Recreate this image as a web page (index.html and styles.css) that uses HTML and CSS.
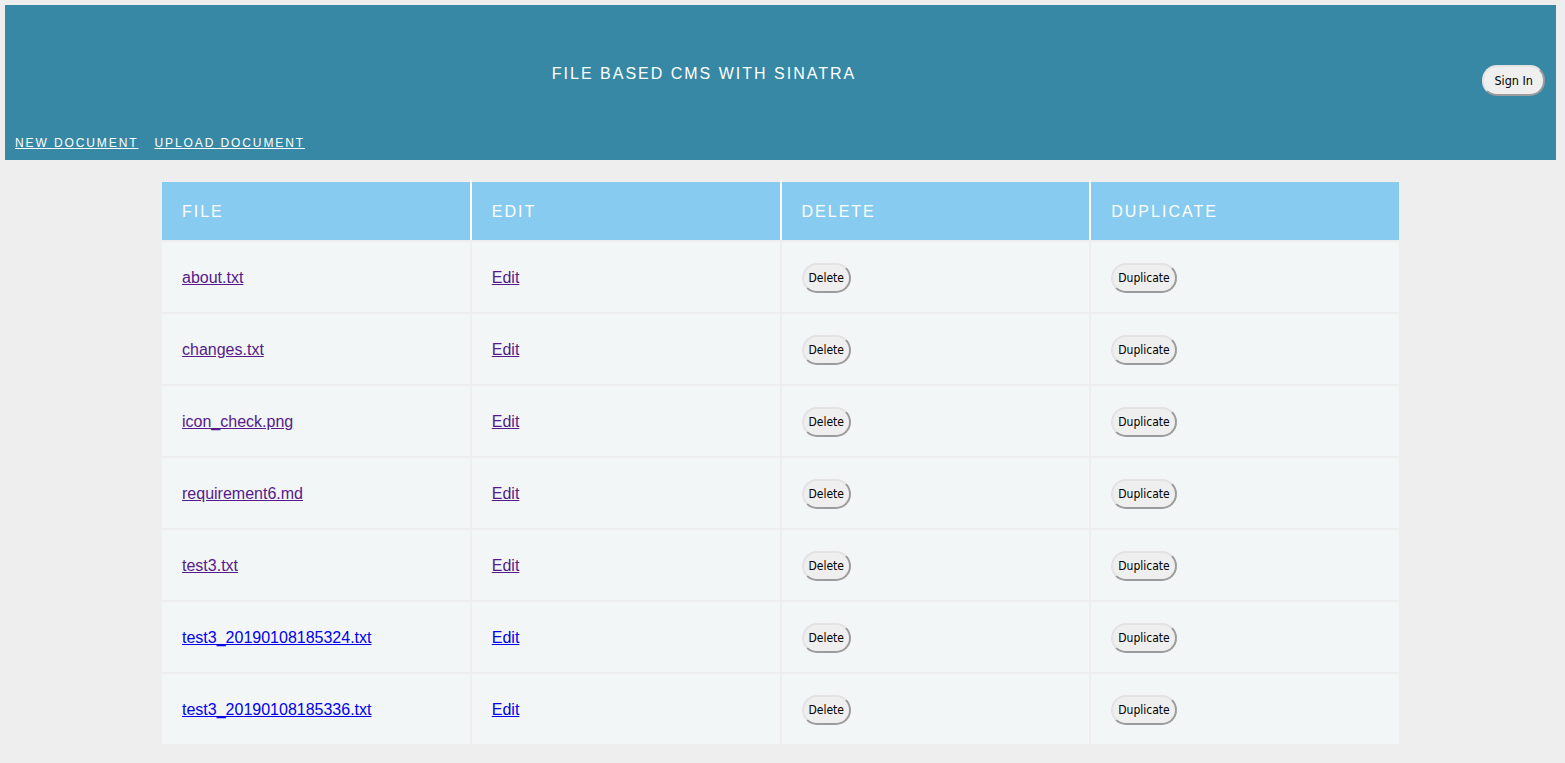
FILE: index.html
```html
<!DOCTYPE html>
<html lang="en">
<head>
<meta charset="utf-8">
<title>File Based CMS with Sinatra</title>
<link rel="stylesheet" href="styles.css">
</head>
<body>
<header class="site-header">
  <div class="top-row">
    <h1 class="title">FILE BASED CMS WITH SINATRA</h1>
    <button class="btn signin">Sign In</button>
  </div>
  <nav class="nav">
    <a href="#">NEW DOCUMENT</a>
    <a href="#">UPLOAD DOCUMENT</a>
  </nav>
</header>
<main class="content">
  <table class="files">
    <thead>
      <tr><th>FILE</th><th>EDIT</th><th>DELETE</th><th>DUPLICATE</th></tr>
    </thead>
    <tbody>
      <tr><td><a class="visited" href="#">about.txt</a></td><td><a class="visited" href="#">Edit</a></td><td><button class="btn">Delete</button></td><td><button class="btn">Duplicate</button></td></tr>
      <tr><td><a class="visited" href="#">changes.txt</a></td><td><a class="visited" href="#">Edit</a></td><td><button class="btn">Delete</button></td><td><button class="btn">Duplicate</button></td></tr>
      <tr><td><a class="visited" href="#">icon_check.png</a></td><td><a class="visited" href="#">Edit</a></td><td><button class="btn">Delete</button></td><td><button class="btn">Duplicate</button></td></tr>
      <tr><td><a class="visited" href="#">requirement6.md</a></td><td><a class="visited" href="#">Edit</a></td><td><button class="btn">Delete</button></td><td><button class="btn">Duplicate</button></td></tr>
      <tr><td><a class="visited" href="#">test3.txt</a></td><td><a class="visited" href="#">Edit</a></td><td><button class="btn">Delete</button></td><td><button class="btn">Duplicate</button></td></tr>
      <tr><td><a class="fresh" href="#">test3_20190108185324.txt</a></td><td><a class="fresh" href="#">Edit</a></td><td><button class="btn">Delete</button></td><td><button class="btn">Duplicate</button></td></tr>
      <tr><td><a class="fresh" href="#">test3_20190108185336.txt</a></td><td><a class="fresh" href="#">Edit</a></td><td><button class="btn">Delete</button></td><td><button class="btn">Duplicate</button></td></tr>
    </tbody>
  </table>
</main>
</body>
</html>
```
FILE: styles.css
```css
html, body {
  margin: 0;
  padding: 0;
}
body {
  background: #eeeeee;
  font-family: "Liberation Sans", Arial, sans-serif;
  padding: 5px 9px 5px 5px;
}
.site-header {
  background: #3788a5;
  height: 155px;
  box-sizing: border-box;
  display: flex;
  flex-direction: column;
}
.top-row {
  display: flex;
  align-items: flex-start;
  height: 131px;
  box-sizing: border-box;
  padding: 60px 11px 0 0;
}
.title {
  width: 1398px;
  margin: -6px 0 0 0;
  line-height: 30px;
  text-align: center;
  color: #ffffff;
  font-size: 16px;
  font-weight: normal;
  letter-spacing: 2px;
}
.btn {
  font-family: "DejaVu Sans Condensed", "DejaVu Sans", Tahoma, sans-serif;
  font-size: 12px;
  color: #000;
  background: #efefef;
  border: 2px solid;
  border-color: #e3e3e3 #9c9c9c #9c9c9c #e3e3e3;
  border-radius: 15px;
  height: 30px;
  padding: 0 5px;
  cursor: pointer;
}
.signin {
  margin-left: auto;
  height: 31px;
  padding: 0 10px;
  font-size: 12.5px;
}
.nav {
  display: flex;
  gap: 16px;
  padding-left: 10px;
}
.nav a {
  color: #ffffff;
  font-size: 12px;
  letter-spacing: 1.9px;
  text-decoration: underline;
}
.content {
  display: flex;
  justify-content: center;
  padding-top: 20px;
}
.files {
  width: 1241px;
  border-collapse: collapse;
}
.files th {
  background: #88cbf0;
  color: #ffffff;
  font-weight: normal;
  font-size: 16px;
  letter-spacing: 2px;
  text-align: left;
  height: 56px;
  padding: 2px 0 0 20px;
  border: 2px solid #eeeeee;
  border-right-color: #ffffff;
  border-left-color: #ffffff;
  width: 25%;
}
.files th:first-child { border-left-color: #eeeeee; }
.files th:last-child { border-right-color: #eeeeee; }
.files td {
  background: #f3f6f7;
  border: 2px solid #eeeeee;
  height: 68px;
  padding: 2px 0 0 20px;
  font-size: 16px;
}
.files a.visited { color: #551a8b; }
.files a.fresh { color: #0000ee; }
```
